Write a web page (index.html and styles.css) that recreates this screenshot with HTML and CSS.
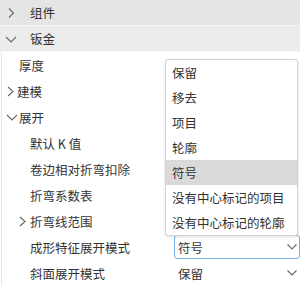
FILE: index.html
```html
<!DOCTYPE html>
<html lang="zh">

<head>
    <meta charset="UTF-8">
    <title>钣金设置</title>
    <link rel="stylesheet" href="styles.css">
</head>

<body>
    <div class="panel">
        <div class="group-head">
            <svg class="chev" width="12" height="12" viewBox="0 0 12 12"><path d="M4 1.5 L8.5 6 L4 10.5" /></svg>
            <span>组件</span>
        </div>
        <div class="group-head open">
            <svg class="chev" width="12" height="12" viewBox="0 0 12 12"><path d="M1 4 L6 9 L11 4" /></svg>
            <span>钣金</span>
        </div>

        <div class="tree">
            <div class="row lvl1"><span class="label">厚度</span></div>
            <div class="row lvl0">
                <svg class="chev small" width="10" height="12" viewBox="0 0 10 12"><path d="M2 2 L7 6.5 L2 11" /></svg>
                <span class="label">建模</span>
            </div>
            <div class="row lvl0">
                <svg class="chev small" width="12" height="12" viewBox="0 0 12 12"><path d="M1 4 L6 9 L11 4" /></svg>
                <span class="label">展开</span>
            </div>
            <div class="row lvl2"><span class="label">默认 K 值</span></div>
            <div class="row lvl2"><span class="label">卷边相对折弯扣除</span></div>
            <div class="row lvl2"><span class="label">折弯系数表</span></div>
            <div class="row lvl1b">
                <svg class="chev small" width="10" height="12" viewBox="0 0 10 12"><path d="M2 2 L7 6.5 L2 11" /></svg>
                <span class="label">折弯线范围</span>
            </div>
            <div class="row lvl2">
                <span class="label">成形特征展开模式</span>
                <div class="select focused">
                    <span>符号</span>
                    <svg class="arrow" width="10" height="6" viewBox="0 0 10 6"><path d="M0.5 0.5 L5 5 L9.5 0.5" /></svg>
                </div>
            </div>
            <div class="row lvl2">
                <span class="label">斜面展开模式</span>
                <div class="select">
                    <span>保留</span>
                    <svg class="arrow" width="10" height="6" viewBox="0 0 10 6"><path d="M0.5 0.5 L5 5 L9.5 0.5" /></svg>
                </div>
            </div>
        </div>

        <!-- open list of the focused select -->
        <ul class="dropdown">
            <li>保留</li>
            <li>移去</li>
            <li>项目</li>
            <li>轮廓</li>
            <li class="active">符号</li>
            <li>没有中心标记的项目</li>
            <li>没有中心标记的轮廓</li>
        </ul>
    </div>
</body>

</html>
```

FILE: styles.css
```css
body {
    margin: 0;
    background-color: #fff;
    font-family: "Noto Sans CJK SC", "Liberation Sans", sans-serif;
    font-size: 12.5px;
    color: #333;
}

.panel {
    position: relative;
    width: 300px;
    height: 299px;
    overflow: hidden;
}

.chev path,
.arrow path {
    fill: none;
    stroke: #666;
    stroke-width: 1.1;
}

.group-head {
    display: flex;
    align-items: center;
    height: 25px;
    padding-left: 5px;
    background-color: #e5e5e5;
    border-bottom: 1px solid #f6f6f6;
}

.group-head.open {
    background-color: #ececec;
}

.group-head span {
    margin-left: 13px;
}

.tree {
    border-left: 1px solid #e6e6e6;
    margin-left: 1px;
}

.row {
    display: flex;
    align-items: center;
    height: 26px;
}

.lvl0 {
    padding-left: 4px;
}

.lvl0 .chev {
    margin-right: 1px;
}

.lvl1 {
    padding-left: 17px;
}

.lvl1b {
    padding-left: 16px;
}

.lvl1b .chev {
    margin-right: 2px;
}

.lvl2 {
    padding-left: 28px;
}

.select {
    display: flex;
    align-items: center;
    justify-content: space-between;
    box-sizing: border-box;
    width: 126px;
    height: 24px;
    margin-left: auto;
    padding: 0 2px 0 3px;
    border: 1px solid transparent;
    border-radius: 3px;
}

.select.focused {
    border-color: #7aaee6;
}

.dropdown {
    position: absolute;
    top: 59px;
    left: 165px;
    width: 131px;
    margin: 0;
    padding: 0;
    list-style: none;
    background-color: #fff;
    border: 1px solid #d2d2d2;
    border-radius: 3px;
    box-shadow: 0 1px 3px rgba(0, 0, 0, 0.12);
}

.dropdown li {
    height: 25px;
    line-height: 25px;
    padding-left: 6px;
}

.dropdown li.active {
    background-color: #d9d9d9;
}
```
